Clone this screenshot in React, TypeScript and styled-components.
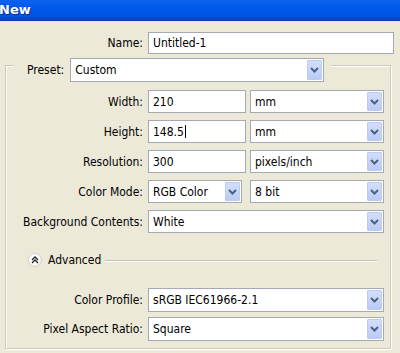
import React from "react";
import styled, { createGlobalStyle } from "styled-components";

const GlobalStyle = createGlobalStyle`
  html, body { margin: 0; padding: 0; background: #ece9d8; }
  body { font-family: "DejaVu Sans Condensed", "DejaVu Sans", "Liberation Sans", sans-serif; font-size: 12px; color: #000; }
`;

const Window = styled.div`
  width: 400px;
  height: 353px;
  overflow: hidden;
  background: #ece9d8;
  display: flex;
  flex-direction: column;
`;

const TitleBar = styled.div`
  height: 20px;
  flex: none;
  background: linear-gradient(#0a62ee 0%, #0058ea 45%, #0053e2 80%, #0a40bc 100%);
  border-bottom: 1px solid #0c3ea8;
  color: #fff;
  font-family: "DejaVu Sans", "Liberation Sans", sans-serif;
  font-weight: bold;
  font-size: 13px;
  line-height: 19px;
  text-indent: -1px;
  text-shadow: 1px 1px 0 #0a2d8a;
`;

const Content = styled.div`
  padding-top: 11px;
  display: flex;
  flex-direction: column;
`;

const Row = styled.div<{ $mt?: number; $h?: number }>`
  display: flex;
  align-items: center;
  height: ${(p) => p.$h ?? 23}px;
  margin-top: ${(p) => p.$mt ?? 0}px;
`;

const Label = styled.div<{ $w: number }>`
  width: ${(p) => p.$w}px;
  margin-right: 5px;
  text-align: right;
  white-space: nowrap;
  flex: none;
`;

const Field = styled.div<{ $w: number; $h?: number; $ml?: number }>`
  box-sizing: border-box;
  width: ${(p) => p.$w}px;
  height: ${(p) => p.$h ?? 23}px;
  margin-left: ${(p) => p.$ml ?? 0}px;
  border: 1px solid #a3aab3;
  background: #fff;
  display: flex;
  align-items: center;
  padding-left: 4px;
  white-space: nowrap;
  flex: none;
`;

const Caret = styled.span`
  display: inline-block;
  width: 1px;
  height: 13px;
  background: #000;
  margin-left: 1px;
`;

const SelectBox = styled(Field)`
  padding-right: 1px;
  justify-content: space-between;
`;

const ArrowButton = styled.div`
  width: 15px;
  align-self: stretch;
  margin: 1px 0;
  box-sizing: border-box;
  border: 1px solid #bccbef;
  border-radius: 1px;
  background: linear-gradient(#d3defb, #b9cbf6);
  display: flex;
  align-items: center;
  justify-content: center;
`;

const Group = styled.div`
  box-sizing: border-box;
  width: 386px;
  margin: 11px 0 0 5px;
  border: 1px solid #cdcab9;
  box-shadow: inset 1px 1px 0 #fff, 1px 1px 0 #fff;
  padding-bottom: 5px;
  height: 284px;
  display: flex;
  flex-direction: column;
`;

const GroupHeader = styled.div`
  display: flex;
  align-items: center;
  gap: 6px;
  margin: -8px 0 0 8px;
  padding: 0 7px 0 13px;
  background: #ece9d8;
  align-self: flex-start;
  height: 24px;
`;

const AdvancedRow = styled.div`
  display: flex;
  align-items: center;
  height: 20px;
  margin: 17px 13px 0 22px;
`;

const RoundButton = styled.div`
  width: 14px;
  height: 14px;
  border-radius: 50%;
  box-sizing: border-box;
  border: 1px solid #d6d3c6;
  background: radial-gradient(circle at 40% 35%, #ffffff 40%, #e4e2d8 100%);
  display: flex;
  align-items: center;
  justify-content: center;
  flex: none;
`;

const AdvancedText = styled.span`
  margin-left: 6px;
  margin-right: 4px;
`;

const Rule = styled.div`
  flex: 1;
  height: 1px;
  background: #c5c2b2;
  border-bottom: 1px solid #fff;
  margin-top: 1px;
`;

const Chevron = () => (
  <svg width="9" height="6" viewBox="0 0 9 6">
    <path d="M1 1 L4.5 4.5 L8 1" fill="none" stroke="#4d6185" strokeWidth="2" />
  </svg>
);

const DoubleUp = () => (
  <svg width="8" height="8" viewBox="0 0 8 8">
    <path d="M1 4 L4 1 L7 4 M1 7 L4 4 L7 7" fill="none" stroke="#222" strokeWidth="1.3" />
  </svg>
);

const Select: React.FC<{ w: number; h?: number; ml?: number; value: string }> = ({ w, h, ml, value }) => (
  <SelectBox $w={w} $h={h} $ml={ml}>
    <span>{value}</span>
    <ArrowButton>
      <Chevron />
    </ArrowButton>
  </SelectBox>
);

const LW = 137;

export default function App() {
  return (
    <Window>
      <GlobalStyle />
      <TitleBar>New</TitleBar>
      <Content>
        <Row $h={22}>
          <Label $w={143}>Name:</Label>
          <Field $w={246} $h={22}>Untitled-1</Field>
        </Row>
        <Group>
          <GroupHeader>
            <span>Preset:</span>
            <Select w={254} h={24} value="Custom" />
          </GroupHeader>
          <Row $mt={8}>
            <Label $w={LW}>Width:</Label>
            <Field $w={98}>210</Field>
            <Select w={134} ml={4} value="mm" />
          </Row>
          <Row $mt={7}>
            <Label $w={LW}>Height:</Label>
            <Field $w={98}>
              148.5
              <Caret />
            </Field>
            <Select w={134} ml={4} value="mm" />
          </Row>
          <Row $mt={7}>
            <Label $w={LW}>Resolution:</Label>
            <Field $w={98}>300</Field>
            <Select w={134} ml={4} value="pixels/inch" />
          </Row>
          <Row $mt={7}>
            <Label $w={LW}>Color Mode:</Label>
            <Select w={94} value="RGB Color" />
            <Select w={134} ml={8} value="8 bit" />
          </Row>
          <Row $mt={7}>
            <Label $w={LW}>Background Contents:</Label>
            <Select w={236} value="White" />
          </Row>
          <AdvancedRow>
            <RoundButton>
              <DoubleUp />
            </RoundButton>
            <AdvancedText>Advanced</AdvancedText>
            <Rule />
          </AdvancedRow>
          <Row $mt={18}>
            <Label $w={LW}>Color Profile:</Label>
            <Select w={236} h={24} value="sRGB IEC61966-2.1" />
          </Row>
          <Row $mt={6}>
            <Label $w={LW}>Pixel Aspect Ratio:</Label>
            <Select w={236} h={24} value="Square" />
          </Row>
        </Group>
      </Content>
    </Window>
  );
}
